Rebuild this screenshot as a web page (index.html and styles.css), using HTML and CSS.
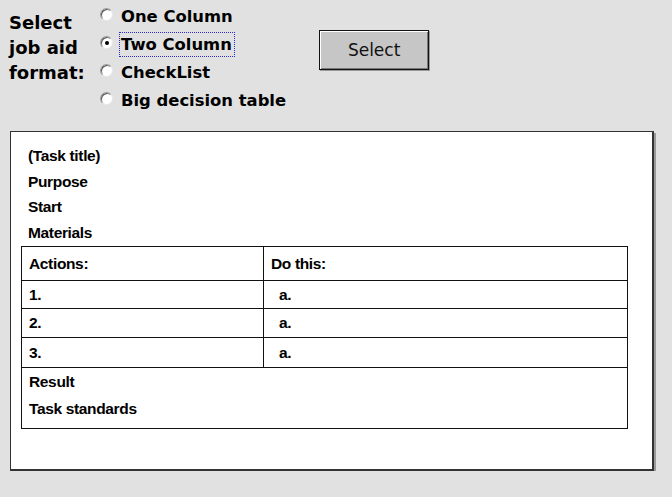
FILE: index.html
```html
<!DOCTYPE html>
<html lang="en">
<head>
  <meta charset="UTF-8">
  <title>Job Aid Format</title>
  <link rel="stylesheet" href="styles.css">
</head>
<body>

  <div class="chooser">
    <div class="prompt">Select<br>job aid<br>format:</div>
    <div class="options">
      <label class="option"><span class="radio"></span><span class="opt-text">One Column</span></label>
      <label class="option"><span class="radio checked"></span><span class="opt-text focused">Two Column</span></label>
      <label class="option"><span class="radio"></span><span class="opt-text">CheckList</span></label>
      <label class="option"><span class="radio"></span><span class="opt-text">Big decision table</span></label>
    </div>
    <button class="select-btn">Select</button>
  </div>

  <div class="preview">
    <div class="heading">
      <div>(Task title)</div>
      <div>Purpose</div>
      <div>Start</div>
      <div>Materials</div>
    </div>
    <table class="steps">
      <tr class="head-row">
        <td class="col-a">Actions:</td>
        <td class="col-b">Do this:</td>
      </tr>
      <tr class="r1">
        <td class="col-a">1.</td>
        <td class="col-b sub">a.</td>
      </tr>
      <tr class="r2">
        <td class="col-a">2.</td>
        <td class="col-b sub">a.</td>
      </tr>
      <tr class="r3">
        <td class="col-a">3.</td>
        <td class="col-b sub">a.</td>
      </tr>
      <tr>
        <td colspan="2" class="foot">
          <div>Result</div>
          <div>Task standards</div>
        </td>
      </tr>
    </table>
  </div>

</body>
</html>
```

FILE: styles.css
```css
body {
  margin: 0;
  padding: 0;
  background: #e1e1e1;
  font-family: 'DejaVu Sans', Verdana, sans-serif;
  color: #000;
}

.chooser {
  display: flex;
  align-items: flex-start;
  height: 131px;
}

.prompt {
  margin: 10px 0 0 9px;
  font-size: 18px;
  font-weight: bold;
  line-height: 25px;
  width: 91px;
}

.options {
  display: flex;
  flex-direction: column;
  margin-top: 2px;
}

.option {
  display: flex;
  align-items: center;
  height: 28px;
}

.radio {
  width: 11px;
  height: 11px;
  border-radius: 50%;
  background: #fff;
  border: 1px solid #9a9a9a;
  border-right-color: #e8e8e8;
  border-bottom-color: #e8e8e8;
  box-shadow: inset 1px 1px 0 #555;
  margin-right: 6px;
  margin-top: -4px;
  position: relative;
}

.radio.checked::after {
  content: "";
  position: absolute;
  left: 4px;
  top: 4px;
  width: 4px;
  height: 4px;
  border-radius: 50%;
  background: #000;
}

.opt-text {
  font-size: 16.4px;
  font-weight: bold;
  padding: 2px 2px 2px 1px;
  border: 1px dotted transparent;
}

.opt-text.focused {
  border-color: #2b2bd8;
}

.select-btn {
  margin: 30px 0 0 30px;
  width: 110px;
  height: 40px;
  background: #c6c6c6;
  border: 1px solid #111;
  box-shadow: inset 1px 1px 0 #fff, inset -1px -1px 0 #7a7a7a, 1px 1px 0 #999;
  font-family: 'DejaVu Sans', Tahoma, sans-serif;
  font-size: 17px;
  color: #111;
  padding: 0;
}

.preview {
  margin-left: 10px;
  width: 616px;
  height: 337px;
  padding: 0 15px 0 10px;
  background: #fff;
  border: 1px solid #333;
  border-right: 2px solid #333;
  border-bottom: 2px solid #333;
  box-shadow: 2px 2px 0 #9a9a9a;
  font-family: 'Liberation Sans', Arial, sans-serif;
  font-size: 15.5px;
  font-weight: bold;
  letter-spacing: -0.35px;
}

.heading {
  padding: 11px 0 0 7px;
  line-height: 25.5px;
  height: 103px;
}

.steps {
  width: 607px;
  border-collapse: collapse;
  font: inherit;
}

.steps td {
  border: 1px solid #111;
  padding: 0 0 0 7px;
  vertical-align: middle;
}

.col-a {
  width: 234px;
}

.col-b.sub {
  padding-left: 15px;
}

.head-row td {
  height: 33px;
}

.r1 td {
  height: 27px;
}

.r2 td {
  height: 28px;
}

.r3 td {
  height: 29px;
}

.steps .foot {
  height: 60px;
  line-height: 27px;
  vertical-align: top;
}
```
